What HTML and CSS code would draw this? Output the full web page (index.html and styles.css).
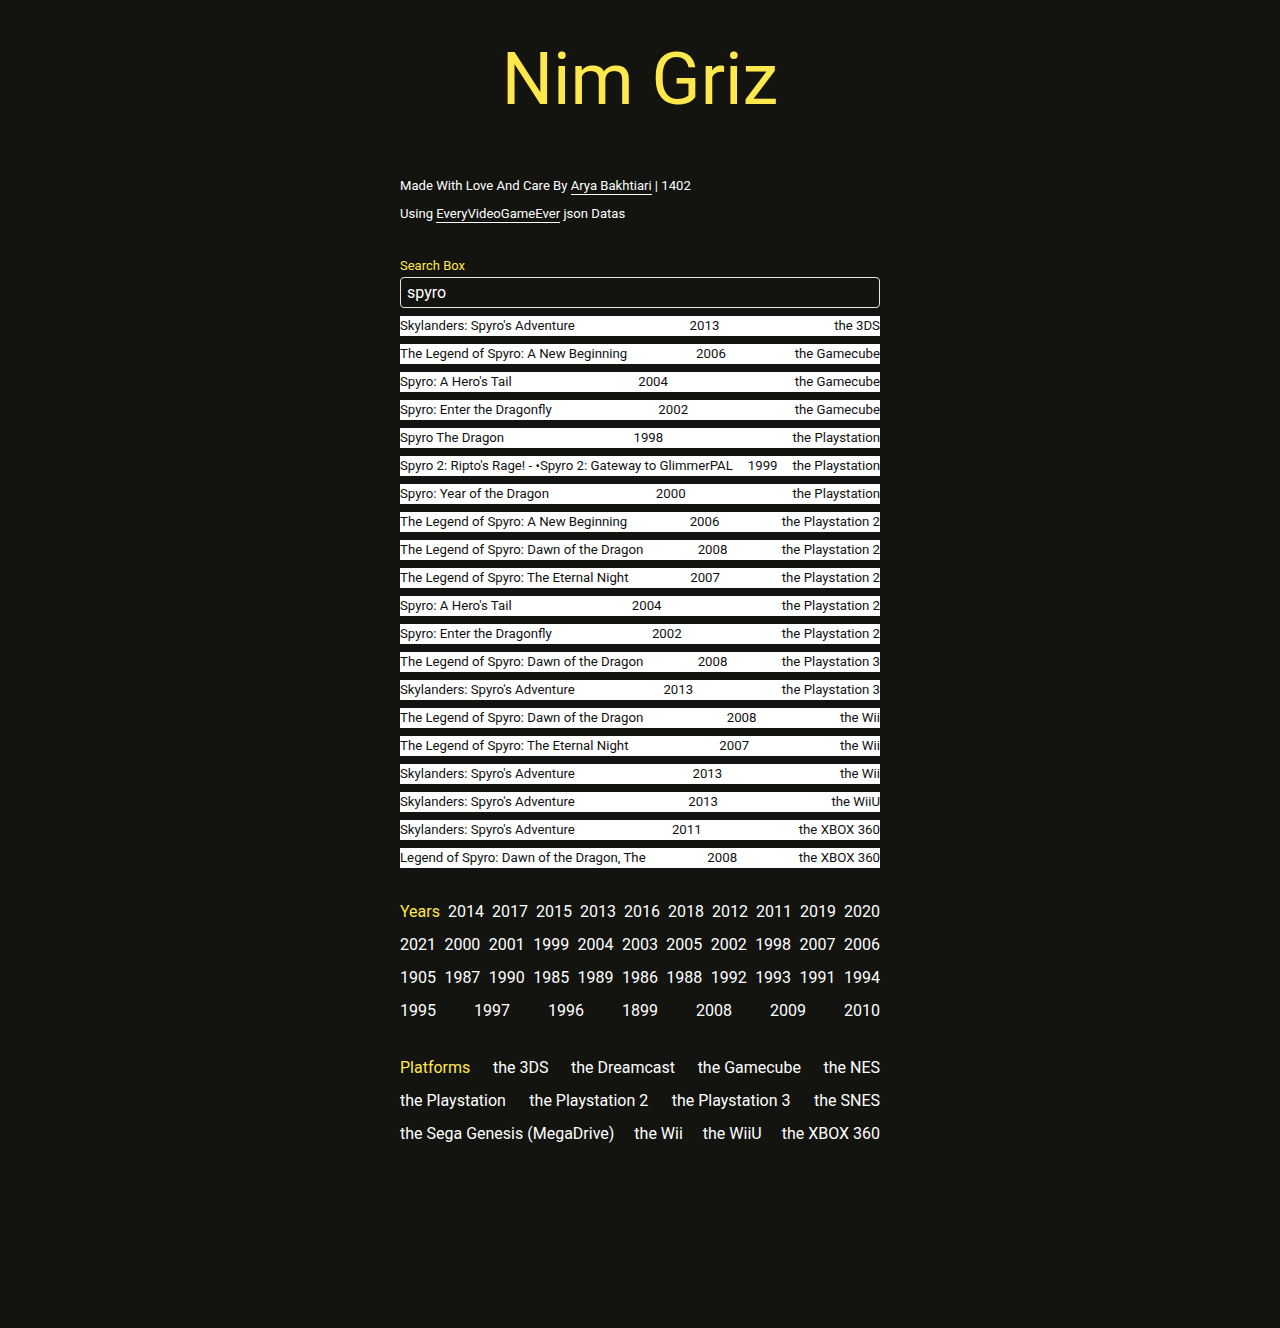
FILE: index.html
```html
<!DOCTYPE html>
<html lang="en">
<head>
<meta charset="utf-8">
<title>Nim Griz</title>
<link rel="stylesheet" href="styles.css">
</head>
<body>
<header class="hero"><h1 class="title">Nim Griz</h1></header>
<main class="wrap">
  <section class="credits">
    <p>Made With Love And Care By <a class="link" href="#">Arya Bakhtiari</a> | 1402</p>
    <p>Using <a class="link" href="#">EveryVideoGameEver</a> json Datas</p>
  </section>
  <section class="search">
    <label class="label" for="q">Search Box</label>
    <input id="q" class="input" type="text" value="spyro">
    <ul class="results">
      <li class="row"><span>Skylanders: Spyro's Adventure</span><span>2013</span><span>the 3DS</span></li>
      <li class="row"><span>The Legend of Spyro: A New Beginning</span><span>2006</span><span>the Gamecube</span></li>
      <li class="row"><span>Spyro: A Hero's Tail</span><span>2004</span><span>the Gamecube</span></li>
      <li class="row"><span>Spyro: Enter the Dragonfly</span><span>2002</span><span>the Gamecube</span></li>
      <li class="row"><span>Spyro The Dragon</span><span>1998</span><span>the Playstation</span></li>
      <li class="row"><span>Spyro 2: Ripto's Rage! - •Spyro 2: Gateway to GlimmerPAL</span><span>1999</span><span>the Playstation</span></li>
      <li class="row"><span>Spyro: Year of the Dragon</span><span>2000</span><span>the Playstation</span></li>
      <li class="row"><span>The Legend of Spyro: A New Beginning</span><span>2006</span><span>the Playstation 2</span></li>
      <li class="row"><span>The Legend of Spyro: Dawn of the Dragon</span><span>2008</span><span>the Playstation 2</span></li>
      <li class="row"><span>The Legend of Spyro: The Eternal Night</span><span>2007</span><span>the Playstation 2</span></li>
      <li class="row"><span>Spyro: A Hero's Tail</span><span>2004</span><span>the Playstation 2</span></li>
      <li class="row"><span>Spyro: Enter the Dragonfly</span><span>2002</span><span>the Playstation 2</span></li>
      <li class="row"><span>The Legend of Spyro: Dawn of the Dragon</span><span>2008</span><span>the Playstation 3</span></li>
      <li class="row"><span>Skylanders: Spyro's Adventure</span><span>2013</span><span>the Playstation 3</span></li>
      <li class="row"><span>The Legend of Spyro: Dawn of the Dragon</span><span>2008</span><span>the Wii</span></li>
      <li class="row"><span>The Legend of Spyro: The Eternal Night</span><span>2007</span><span>the Wii</span></li>
      <li class="row"><span>Skylanders: Spyro's Adventure</span><span>2013</span><span>the Wii</span></li>
      <li class="row"><span>Skylanders: Spyro's Adventure</span><span>2013</span><span>the WiiU</span></li>
      <li class="row"><span>Skylanders: Spyro's Adventure</span><span>2011</span><span>the XBOX 360</span></li>
      <li class="row"><span>Legend of Spyro: Dawn of the Dragon, The</span><span>2008</span><span>the XBOX 360</span></li>
    </ul>
  </section>
  <section class="tags years">
    <span class="tag-title">Years</span>
    <span>2014</span><span>2017</span><span>2015</span><span>2013</span><span>2016</span><span>2018</span><span>2012</span><span>2011</span><span>2019</span><span>2020</span>
    <span>2021</span><span>2000</span><span>2001</span><span>1999</span><span>2004</span><span>2003</span><span>2005</span><span>2002</span><span>1998</span><span>2007</span><span>2006</span>
    <span>1905</span><span>1987</span><span>1990</span><span>1985</span><span>1989</span><span>1986</span><span>1988</span><span>1992</span><span>1993</span><span>1991</span><span>1994</span>
    <span>1995</span><span>1997</span><span>1996</span><span>1899</span><span>2008</span><span>2009</span><span>2010</span>
  </section>
  <section class="tags platforms">
    <span class="tag-title">Platforms</span>
    <span>the 3DS</span><span>the Dreamcast</span><span>the Gamecube</span><span>the NES</span>
    <span>the Playstation</span><span>the Playstation 2</span><span>the Playstation 3</span><span>the SNES</span>
    <span>the Sega Genesis (MegaDrive)</span><span>the Wii</span><span>the WiiU</span><span>the XBOX 360</span>
  </section>
</main>
</body>
</html>
```

FILE: styles.css
```css
* { box-sizing: border-box; }
html, body { margin: 0; padding: 0; }
body {
  background: #13130f;
  color: #ffffff;
  font-family: Roboto, "Liberation Sans", sans-serif;
  min-height: 1328px;
}
.hero {
  display: flex;
  justify-content: center;
  padding-top: 38px;
}
.title {
  margin: 0;
  font-size: 72px;
  font-weight: 400;
  line-height: 84px;
  color: #ffe84b;
}
.wrap {
  width: 480px;
  margin: 0 auto;
  padding-top: 54px;
}
.credits p {
  margin: 0 0 8px;
  font-size: 13.1px;
  line-height: 20px;
}
.link {
  color: #ffffff;
  text-decoration: none;
  border-bottom: 1px solid #ffffff;
  padding-bottom: 1px;
}
.search {
  margin-top: 32px;
}
.label {
  display: block;
  font-size: 13px;
  line-height: 20px;
  color: #ffe84b;
}
.input {
  display: block;
  width: 100%;
  height: 31px;
  margin: 1px 0 8px;
  padding: 0 6px;
  border: 1px solid #e6e6e6;
  border-radius: 4px;
  background: transparent;
  color: #ffffff;
  font-family: Roboto, "Liberation Sans", sans-serif;
  font-size: 16px;
  outline: none;
}
.results {
  list-style: none;
  margin: 0;
  padding: 0;
}
.row {
  display: flex;
  justify-content: space-between;
  background: #ffffff;
  color: #111111;
  font-size: 13.22px;
  line-height: 20px;
  height: 20px;
  margin-bottom: 8px;
}
.tags {
  display: flex;
  flex-wrap: wrap;
  justify-content: space-between;
  font-size: 16px;
  line-height: 33px;
}
.years {
  margin-top: 27px;
  column-gap: 7px;
}
.platforms {
  margin-top: 24px;
  column-gap: 18px;
}
.tag-title {
  color: #ffe84b;
}
```
